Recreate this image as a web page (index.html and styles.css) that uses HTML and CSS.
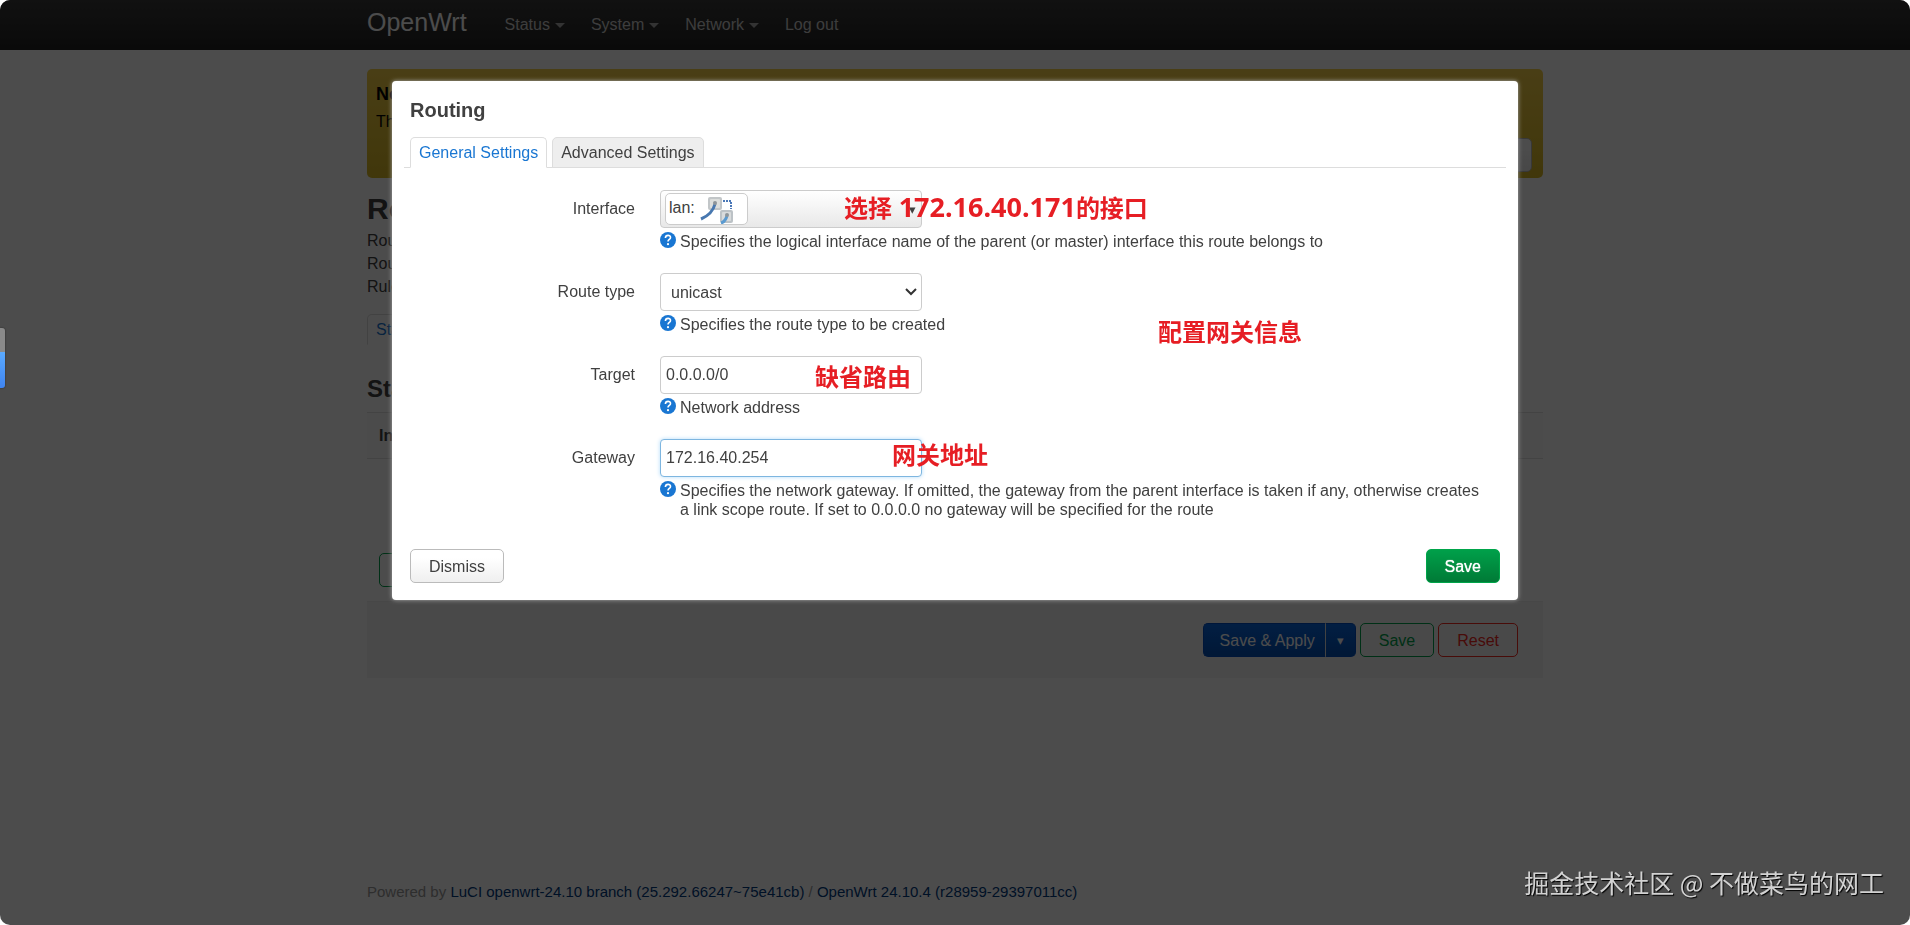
FILE: index.html
```html
<!DOCTYPE html>
<html lang="en">
<head>
  <meta charset="UTF-8" />
  <meta name="viewport" content="width=device-width, initial-scale=1.0" />
  <title>OpenWrt - Routing - LuCI</title>
  <link rel="stylesheet" href="styles.css">
</head>
<body>
  <header class="navbar">
    <div class="container nav-inner">
      <a class="brand" href="#">OpenWrt</a>
      <nav class="nav">
        <a class="has-menu" href="#">Status</a>
        <a class="has-menu" href="#">System</a>
        <a class="has-menu" href="#">Network</a>
        <a href="#">Log out</a>
      </nav>
    </div>
  </header>

  <main class="container">
    <div class="alert-message">
      <h4>No password set!</h4>
      <p>There is no password set on this router. Please configure a root password to protect the web interface.</p>
      <a class="btn alert-btn" href="#">Go to password configuration...</a>
    </div>

    <h2>Routing</h2>
    <div class="description">
      <p>Routing defines over which interface and gateway a certain host or network can be reached.</p>
      <p>Routes specify over which interface and gateway a certain host or network can be reached.</p>
      <p>Rules specify which routing table is used.</p>
    </div>

    <div class="tabs page-tabs">
      <a class="tab active" href="#">Static IPv4 Routes</a>
    </div>

    <h3>Static IPv4 Routes</h3>
    <table class="routes">
      <thead>
        <tr><th>Interface</th><th>Route type</th><th>Target</th><th>Gateway</th></tr>
      </thead>
    </table>
    <div class="create">
      <button class="btn outline-green" type="button">Add</button>
    </div>

    <div class="page-actions">
      <div class="split">
        <button class="btn apply" type="button">Save &amp; Apply</button>
        <button class="btn apply more" type="button" aria-label="More">▾</button>
      </div>
      <button class="btn outline-green" type="button">Save</button>
      <button class="btn outline-red" type="button">Reset</button>
    </div>
  </main>

  <footer class="container footer">
    Powered by <a href="#">LuCI openwrt-24.10 branch (25.292.66247~75e41cb)</a> / <a href="#">OpenWrt 24.10.4 (r28959-29397011cc)</a>
  </footer>

  <div class="overlay">
    <section class="modal" role="dialog" aria-labelledby="modal-title">
      <h4 id="modal-title">Routing</h4>
      <div class="tabs">
        <a class="tab active" href="#">General Settings</a>
        <a class="tab" href="#">Advanced Settings</a>
      </div>

      <form class="fields">
        <div class="row">
          <label for="interface">Interface</label>
          <div class="value">
            <button id="interface" class="control dropdown" type="button">
              <span class="zone">lan:
                <svg width="34" height="28" viewBox="0 0 34 28" aria-hidden="true">
                  <rect x="8" y="1" width="14" height="13" rx="2" fill="#c2c6c8"/>
                  <rect x="10" y="3" width="10" height="9" rx="1" fill="#dcdedc"/>
                  <rect x="20" y="14" width="13" height="13" rx="2" fill="#bcc2c6"/>
                  <rect x="22" y="16" width="9" height="9" rx="1" fill="#d8dbdc"/>
                  <path d="M23 5h8v8" fill="none" stroke="#4a78b8" stroke-width="2" stroke-dasharray="2 1"/>
                  <path d="M1 23C8 20 13 16 15 8" fill="none" stroke="#4878b0" stroke-width="3"/>
                  <path d="M21 27c4-1 5-4 6-7" fill="none" stroke="#5a9ad0" stroke-width="3"/>
                  <circle cx="15" cy="7" r="2" fill="#8d9499"/>
                  <circle cx="27" cy="19" r="2" fill="#8d9499"/>
                </svg>
              </span>
              <span class="arrow">▾</span>
            </button>
            <div class="note note-interface">选择 <span>172.16.40.171</span>的接口</div>
            <div class="help"><svg class="help-icon" viewBox="0 0 16 16" aria-hidden="true"><circle cx="8" cy="8" r="8" fill="#1976d2"/><path d="M5.400 5.900C5.500 2.500 10.700 2.600 10.500 5.700C10.400 7.500 8 7.500 8 9.600" fill="none" stroke="#fff" stroke-width="1.600"/><circle cx="8" cy="12.200" r="1.100" fill="#fff"/></svg>
              <span>Specifies the logical interface name of the parent (or master) interface this route belongs to</span></div>
          </div>
        </div>

        <div class="row">
          <label for="type">Route type</label>
          <div class="value">
            <select id="type" class="control">
              <option>unicast</option>
            </select>
            <div class="note note-info">配置网关信息</div>
            <div class="help"><svg class="help-icon" viewBox="0 0 16 16" aria-hidden="true"><circle cx="8" cy="8" r="8" fill="#1976d2"/><path d="M5.400 5.900C5.500 2.500 10.700 2.600 10.500 5.700C10.400 7.500 8 7.500 8 9.600" fill="none" stroke="#fff" stroke-width="1.600"/><circle cx="8" cy="12.200" r="1.100" fill="#fff"/></svg>
              <span>Specifies the route type to be created</span></div>
          </div>
        </div>

        <div class="row">
          <label for="target">Target</label>
          <div class="value">
            <input id="target" class="control" type="text" value="0.0.0.0/0">
            <div class="note note-target">缺省路由</div>
            <div class="help"><svg class="help-icon" viewBox="0 0 16 16" aria-hidden="true"><circle cx="8" cy="8" r="8" fill="#1976d2"/><path d="M5.400 5.900C5.500 2.500 10.700 2.600 10.500 5.700C10.400 7.500 8 7.500 8 9.600" fill="none" stroke="#fff" stroke-width="1.600"/><circle cx="8" cy="12.200" r="1.100" fill="#fff"/></svg>
              <span>Network address</span></div>
          </div>
        </div>

        <div class="row">
          <label for="gateway">Gateway</label>
          <div class="value">
            <input id="gateway" class="control focused" type="text" value="172.16.40.254">
            <div class="note note-gateway">网关地址</div>
            <div class="help"><svg class="help-icon" viewBox="0 0 16 16" aria-hidden="true"><circle cx="8" cy="8" r="8" fill="#1976d2"/><path d="M5.400 5.900C5.500 2.500 10.700 2.600 10.500 5.700C10.400 7.500 8 7.500 8 9.600" fill="none" stroke="#fff" stroke-width="1.600"/><circle cx="8" cy="12.200" r="1.100" fill="#fff"/></svg>
              <span>Specifies the network gateway. If omitted, the gateway from the parent interface is taken if any, otherwise creates a link scope route. If set to 0.0.0.0 no gateway will be specified for the route</span></div>
          </div>
        </div>
      </form>

      <div class="modal-actions">
        <button class="btn" type="button">Dismiss</button>
        <button class="btn positive" type="button">Save</button>
      </div>
    </section>
  </div>

  <div class="side-handle"></div>
  <div class="watermark">掘金技术社区 @ 不做菜鸟的网工</div>
</body>
</html>
```

FILE: styles.css
```css
* {
  box-sizing: border-box;
}

body {
  margin: 0;
  min-height: 100vh;
  display: flex;
  flex-direction: column;
  background: #fff;
  color: #404040;
  font-family: "Liberation Sans", "Noto Sans CJK SC", sans-serif;
  font-size: 16px;
  line-height: 23px;
}

a {
  color: #0069d6;
  text-decoration: none;
}

h2, h3, h4, p {
  margin: 0;
}

.container {
  width: 100%;
  max-width: 1176px;
  margin: 0 auto;
}

/* top bar */
.navbar {
  height: 50px;
  background: linear-gradient(#3a3a3a, #222);
  border-radius: 10px 10px 0 0;
}

.nav-inner {
  display: flex;
  align-items: center;
  height: 48px;
}

.brand {
  margin-bottom: 4px;
  font-size: 25px;
  color: #fff;
}

.nav {
  display: flex;
  gap: 26px;
  margin-left: 38px;
}

.nav a {
  display: flex;
  align-items: center;
  gap: 5px;
  color: #ccc;
}

.has-menu::after {
  content: "";
  border: 5px solid transparent;
  border-top-color: #aaa;
  border-bottom: 0;
  margin-top: 2px;
}

/* page */
.alert-message {
  display: flex;
  flex-direction: column;
  margin: 19px 0 13px;
  padding: 13px 11px 6px 9px;
  background: linear-gradient(#f5d048, #d8b824);
  border-radius: 5px;
  color: #000;
}

.alert-message h4 {
  font-size: 18px;
  line-height: 24px;
}

.alert-message p {
  line-height: 32px;
}

.alert-btn {
  align-self: flex-end;
  height: 32px;
}

h2 {
  font-size: 30px;
  line-height: 36px;
}

h3 {
  font-size: 24px;
  line-height: 30px;
}

.description {
  margin: 2px 0 16px;
}

.tabs {
  display: flex;
  gap: 5px;
  padding-left: 6px;
  border-bottom: 1px solid #ddd;
}

.tab {
  height: 31px;
  margin-bottom: -1px;
  padding: 3px 8px;
  border: 1px solid #ddd;
  border-radius: 5px 5px 0 0;
  background: #eee;
  color: #404040;
}

.tab.active {
  background: #fff;
  border-bottom-color: #fff;
  color: #1976d2;
}

.page-tabs {
  margin: 0 0 29px;
  padding: 0;
  border-bottom-color: transparent;
}

.routes {
  width: 100%;
  margin-top: 8px;
  border-collapse: collapse;
}

.routes th {
  height: 46px;
  padding: 0 12px;
  border: solid #e2e2e2;
  border-width: 1px 0;
  background: #fafafa;
  text-align: left;
}

.create {
  padding: 94px 12px 14px;
}

.page-actions {
  display: flex;
  justify-content: flex-end;
  gap: 4px;
  padding: 21px 25px;
  background: #f5f5f5;
  border-top: 1px solid #eee;
}

.btn {
  height: 34px;
  padding: 0 18px;
  border: 1px solid #bbb;
  border-radius: 5px;
  background: linear-gradient(#fff 25%, #efefef);
  color: #404040;
  font: inherit;
}

.outline-green {
  background: none;
  border-color: #00a04a;
  color: #00a04a;
}

.outline-red {
  background: none;
  border-color: #f0281e;
  color: #f0281e;
}

.split {
  display: flex;
}

.apply {
  padding: 0 10px 0 16px;
  border-color: #004cc0;
  border-right-color: #ddd;
  border-radius: 5px 0 0 5px;
  background: linear-gradient(#0866e0, #0450b4);
  color: #fff;
}

.more {
  width: 30px;
  padding: 0;
  border-left: 0;
  border-right-color: #004cc0;
  border-radius: 0 5px 5px 0;
  font-size: 13px;
}

.positive {
  border-color: #00a54a;
  background: linear-gradient(#00a04a, #007a36);
  color: #fff;
  text-shadow: 0 0 1px #fff;
}

.footer {
  margin-top: auto;
  padding-bottom: 22px;
  color: #999;
  font-size: 15px;
}

.footer a {
  color: #003a80;
}

/* modal */
.overlay {
  position: fixed;
  inset: 0;
  padding: 81px 20px 0;
  background: rgba(0, 0, 0, 0.7);
  border-radius: 10px;
  z-index: 1;
}

.modal {
  max-width: 1126px;
  margin: 0 auto;
  padding: 14px 18px 17px;
  background: #fff;
  border-radius: 4px;
  box-shadow: 0 0 4px #aaa;
}

.modal h4 {
  margin-bottom: 12px;
  font-size: 20px;
  line-height: 30px;
}

.modal .tabs {
  margin: 0 -6px;
}

.fields {
  padding: 22px 0 8px;
}

.row {
  display: grid;
  grid-template-columns: 225px 1fr;
  column-gap: 25px;
  margin-bottom: 22px;
}

.row label {
  text-align: right;
  line-height: 38px;
}

.value {
  position: relative;
}

.control {
  display: block;
  width: 262px;
  height: 38px;
  padding: 4px 5px;
  border: 1px solid #ccc;
  border-radius: 4px;
  background: #fff;
  color: #404040;
  font: inherit;
  outline: none;
}

.focused {
  border-color: #7eb6e0;
  box-shadow: 0 0 4px #b4dcfa;
}

select.control {
  padding: 4px 10px;
  appearance: none;
  background: #fff url("data:image/svg+xml,%3Csvg xmlns='http://www.w3.org/2000/svg' width='12' height='8'%3E%3Cpath d='M1 1l5 5 5-5' fill='none' stroke='%23333' stroke-width='2'/%3E%3C/svg%3E") no-repeat right 4px center;
}

.dropdown {
  display: flex;
  align-items: center;
  justify-content: space-between;
  padding: 3px 5px 3px 4px;
  background: linear-gradient(#fff, #e8e8e8);
}

.zone {
  display: flex;
  gap: 5px;
  height: 32px;
  padding: 2px 13px 0 3px;
  border: 1px solid #ccc;
  border-radius: 5px;
  background: #fff;
}

.arrow {
  font-size: 13px;
}

.help {
  display: flex;
  gap: 4px;
  margin-top: 4px;
  padding-right: 8px;
  line-height: 19px;
}

.help-icon {
  flex: none;
  width: 16px;
  height: 16px;
}

/* red notes lying over the form */
.note {
  position: absolute;
  color: #e61e24;
  font-size: 24px;
  font-weight: bold;
  line-height: 36px;
  white-space: nowrap;
}

.note span {
  font-family: "Noto Sans", sans-serif;
  font-size: 27px;
}

.note-interface {
  left: 184px;
  top: -1px;
}

.note-info {
  left: 498px;
  top: 42px;
}

.note-target {
  left: 155px;
  top: 4px;
}

.note-gateway {
  left: 232px;
  top: -1px;
}

.modal-actions {
  display: flex;
  justify-content: space-between;
}

.side-handle {
  position: fixed;
  left: 0;
  top: 328px;
  width: 5px;
  height: 60px;
  background: linear-gradient(#8a8a8a 40%, #5aaaff 40%, #3f84f0);
  border-radius: 0 3px 3px 0;
  box-shadow: 0 0 2px #222;
  z-index: 2;
}

.watermark {
  position: fixed;
  right: 26px;
  bottom: 25px;
  color: #d2d2d2;
  font-family: "Noto Sans CJK SC", sans-serif;
  font-size: 25px;
  line-height: 36px;
  text-shadow: 1px 1px 1px #000;
  z-index: 2;
}
```
